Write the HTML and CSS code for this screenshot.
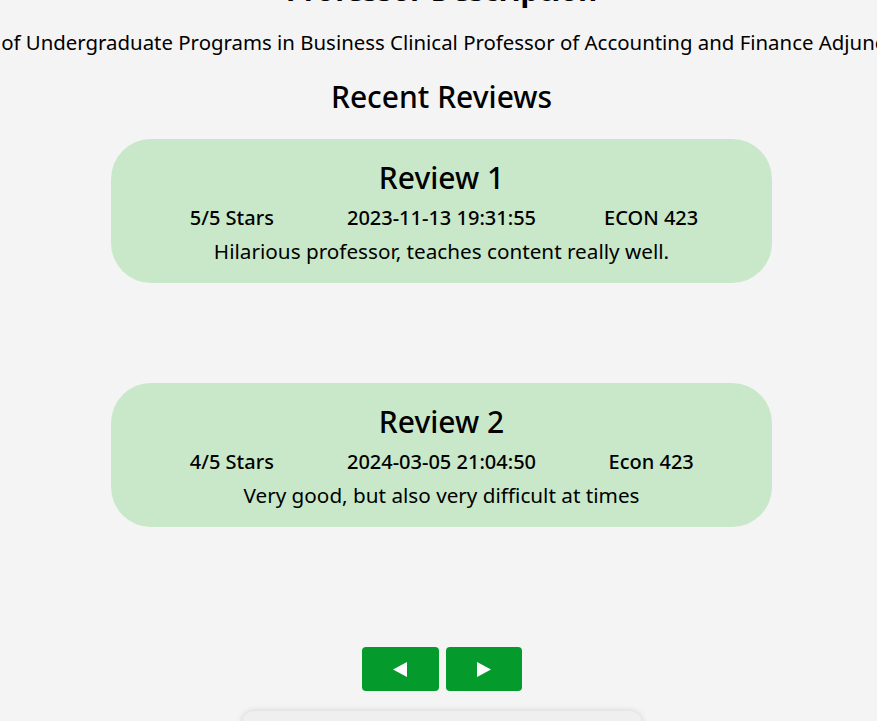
FILE: index.html
```html
<!DOCTYPE html>
<html lang="en">
<head>
<meta charset="utf-8">
<title>Professor</title>
<link rel="stylesheet" href="styles.css">
</head>
<body>
<main class="page">
  <h1 class="title">Professor Description</h1>
  <div class="desc-wrap">
    <p class="desc">Director of Undergraduate Programs in Business Clinical Professor of Accounting and Finance Adjunct Professor</p>
  </div>
  <h2 class="section-title">Recent Reviews</h2>
  <section class="reviews">
    <article class="card">
      <h3 class="card-title">Review 1</h3>
      <div class="meta">
        <span>5/5 Stars</span>
        <span>2023-11-13 19:31:55</span>
        <span>ECON 423</span>
      </div>
      <p class="text">Hilarious professor, teaches content really well.</p>
    </article>
    <article class="card">
      <h3 class="card-title">Review 2</h3>
      <div class="meta">
        <span>4/5 Stars</span>
        <span>2024-03-05 21:04:50</span>
        <span>Econ 423</span>
      </div>
      <p class="text">Very good, but also very difficult at times</p>
    </article>
  </section>
  <nav class="pager">
    <button class="btn" aria-label="Previous"><svg width="14" height="15" viewBox="0 0 14 15"><polygon points="14,0 14,15 0,7.5" fill="#fff"/></svg></button>
    <button class="btn" aria-label="Next"><svg width="14" height="15" viewBox="0 0 14 15"><polygon points="0,0 0,15 14,7.5" fill="#fff"/></svg></button>
  </nav>
  <div class="bottom-box"></div>
</main>
</body>
</html>
```

FILE: styles.css
```css
html, body {
  margin: 0;
  padding: 0;
  background: #f4f4f4;
  overflow: hidden;
}
body {
  font-family: "Noto Sans", "Open Sans", sans-serif;
  color: #000;
}
.page {
  display: flex;
  flex-direction: column;
  align-items: center;
  margin-top: -27px;
  padding-left: 6px;
}
.title {
  margin: 0;
  font-size: 29px;
  font-weight: 700;
  line-height: 34px;
  height: 34px;
}
.desc-wrap {
  width: 871px;
  display: flex;
  justify-content: center;
  margin-top: 22px;
}
.desc {
  margin: 0;
  white-space: nowrap;
  flex: none;
  font-size: 20.4px;
  line-height: 26px;
  padding-left: 24px;
}
.section-title {
  margin: 24px 0 0;
  font-size: 30px;
  font-weight: 500;
  line-height: 36px;
}
.reviews {
  display: flex;
  flex-direction: column;
  gap: 100px;
  margin-top: 24px;
}
.card {
  width: 661px;
  height: 144px;
  box-sizing: border-box;
  background: #c9e8c9;
  border-radius: 40px;
  padding: 21px 16px 0;
  display: flex;
  flex-direction: column;
  align-items: center;
}
.card-title {
  margin: 0;
  font-size: 30px;
  font-weight: 500;
  line-height: 36px;
}
.meta {
  display: grid;
  grid-template-columns: repeat(3, 1fr);
  width: 100%;
  text-align: center;
  font-size: 20px;
  font-weight: 500;
  line-height: 26px;
  margin-top: 9px;
}
.text {
  margin: 7px 0 0;
  font-size: 20.7px;
  line-height: 26px;
}
.pager {
  display: flex;
  gap: 7px;
  margin-top: 120px;
}
.btn {
  width: 77px;
  height: 44px;
  border: none;
  border-radius: 4px;
  background: #049b2c;
  display: flex;
  align-items: center;
  justify-content: center;
  padding: 0;
}
.btn + .btn {
  width: 76px;
}
.bottom-box {
  width: 400px;
  height: 60px;
  margin-top: 20px;
  background: #efefef;
  border-radius: 12px;
  box-shadow: 0 0 6px rgba(0, 0, 0, 0.15);
}
```
